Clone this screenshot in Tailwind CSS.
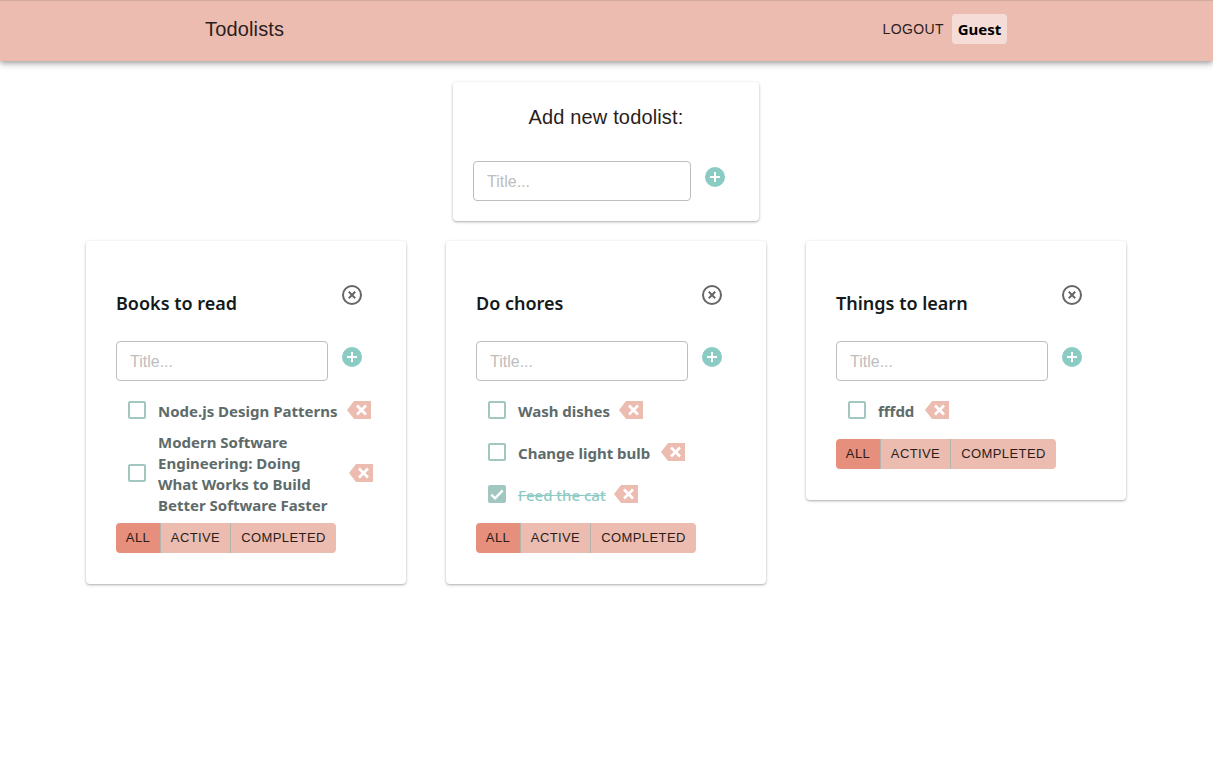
<!DOCTYPE html>
<html><head><meta charset="utf-8">
<script src="https://cdn.jsdelivr.net/npm/@tailwindcss/browser@4"></script>
<title>Todolists</title></head>
<body class="bg-white font-['Liberation_Sans',Arial,sans-serif] text-[#2b1d1b] min-h-screen">
<header class="h-[61px] bg-[#ecbcb1] pl-[205px] pr-[206px] flex items-center justify-between shadow-[inset_0_2px_2px_-2px_rgba(0,0,0,0.35),0_2px_4px_-1px_rgba(0,0,0,0.2),0_4px_5px_0_rgba(0,0,0,0.14),0_1px_10px_0_rgba(0,0,0,0.12)] pb-[3px]">
  <div class="text-[20px] leading-[28px] tracking-[0.15px]">Todolists</div>
  <div class="flex items-center gap-2">
    <span class="text-sm tracking-[0.4px]">LOGOUT</span>
    <span class="h-[30px] w-[55px] flex items-center justify-center rounded bg-[#f5dcd6] text-black text-[15px] font-bold font-['Noto_Sans',sans-serif]">Guest</span>
  </div>
</header>
<main class="flex flex-col items-center pt-[21px] pr-px pb-10">
  <section class="w-[306px] h-[139px] bg-white rounded shadow-[0_1px_3px_0_rgba(0,0,0,0.3),0_1px_1px_0_rgba(0,0,0,0.05)] pt-[23px]">
    <h2 class="text-[20px] leading-[24px] text-center tracking-[0.15px]">Add new todolist:</h2>
    <div class="flex items-start gap-[14px] mt-[32px] ml-5">
      <div class="w-[218px] h-10 border border-[#bdbdbd] rounded pl-[13px] pt-px flex items-center text-base text-[#bdbdbd]">Title...</div>
      <svg class="w-5 h-5 mt-[6px]" viewBox="0 0 20 20"><circle cx="10" cy="10" r="10" fill="#8acbc4"/><path d="M10 5v10M5 10h10" stroke="#fff" stroke-width="2"/></svg>
    </div>
  </section>
  <div class="flex items-start gap-10 mt-5">
    <section class="w-80 bg-white rounded shadow-[0_1px_3px_0_rgba(0,0,0,0.3),0_1px_1px_0_rgba(0,0,0,0.05)] pl-[30px] pt-[44px] pb-[31px]">
      <div class="flex w-[246px] justify-between items-start">
        <h3 class="text-[18px] leading-[26px] mt-[5px] font-semibold text-[#14191a] font-['Noto_Sans',sans-serif]">Books to read</h3>
        <svg class="w-5 h-5" viewBox="0 0 20 20"><circle cx="10" cy="10" r="9" fill="none" stroke="#666" stroke-width="2"/><path d="M6.8 6.8l6.4 6.4M13.2 6.8l-6.4 6.4" stroke="#666" stroke-width="2"/></svg>
      </div>
      <div class="flex items-start gap-[14px] mt-[25px] mb-[19px]">
        <div class="w-[212px] h-10 border border-[#bdbdbd] rounded pl-[13px] pt-px flex items-center text-base text-[#bdbdbd]">Title...</div>
        <svg class="w-5 h-5 mt-[6px]" viewBox="0 0 20 20"><circle cx="10" cy="10" r="10" fill="#8acbc4"/><path d="M10 5v10M5 10h10" stroke="#fff" stroke-width="2"/></svg>
      </div>
      <ul class="font-['Noto_Sans',sans-serif] text-[15px] leading-[21px] font-bold text-[#5e6b6b]">
        <li class="flex items-center pl-[12px] h-[21px] mb-[11px]">
          <span class="w-[18px] h-[18px] mb-[2px] border-2 border-[#a2c7c1] rounded-[2px] shrink-0"></span>
          <span class="ml-[12px] pt-[2px]">Node.js Design Patterns</span>
          <svg class="w-6 h-[18px] ml-[10px] mb-[2px] shrink-0" viewBox="0 0 24 18"><path d="M7 0H24V18H7L0 9Z" fill="#ecbcb1"/><path d="M10 4.5l9 9M19 4.5l-9 9" stroke="#fff" stroke-width="2.6"/></svg>
        </li>
        <li class="flex items-center pl-[12px] mb-[7px]">
          <span class="w-[18px] h-[18px] mb-[2px] border-2 border-[#a2c7c1] rounded-[2px] shrink-0"></span>
          <span class="ml-[12px] w-[179px]">Modern Software Engineering: Doing What Works to Build Better Software Faster</span>
          <svg class="w-6 h-[18px] ml-[12px] mb-[2px] shrink-0" viewBox="0 0 24 18"><path d="M7 0H24V18H7L0 9Z" fill="#ecbcb1"/><path d="M10 4.5l9 9M19 4.5l-9 9" stroke="#fff" stroke-width="2.6"/></svg>
        </li>
      </ul>
      <div class="flex w-fit h-[30px] text-[13px] tracking-[0.4px] rounded overflow-hidden">
        <span class="w-[45px] bg-[#e68f7c] border-r border-[#b5b5ad] flex items-center justify-center">ALL</span>
        <span class="w-[70px] bg-[#ecbcb1] border-r border-[#b5b5ad] flex items-center justify-center">ACTIVE</span>
        <span class="w-[105px] bg-[#ecbcb1] flex items-center justify-center">COMPLETED</span>
      </div>
    </section>
    <section class="w-80 bg-white rounded shadow-[0_1px_3px_0_rgba(0,0,0,0.3),0_1px_1px_0_rgba(0,0,0,0.05)] pl-[30px] pt-[44px] pb-[31px]">
      <div class="flex w-[246px] justify-between items-start">
        <h3 class="text-[18px] leading-[26px] mt-[5px] font-semibold text-[#14191a] font-['Noto_Sans',sans-serif]">Do chores</h3>
        <svg class="w-5 h-5" viewBox="0 0 20 20"><circle cx="10" cy="10" r="9" fill="none" stroke="#666" stroke-width="2"/><path d="M6.8 6.8l6.4 6.4M13.2 6.8l-6.4 6.4" stroke="#666" stroke-width="2"/></svg>
      </div>
      <div class="flex items-start gap-[14px] mt-[25px] mb-[19px]">
        <div class="w-[212px] h-10 border border-[#bdbdbd] rounded pl-[13px] pt-px flex items-center text-base text-[#bdbdbd]">Title...</div>
        <svg class="w-5 h-5 mt-[6px]" viewBox="0 0 20 20"><circle cx="10" cy="10" r="10" fill="#8acbc4"/><path d="M10 5v10M5 10h10" stroke="#fff" stroke-width="2"/></svg>
      </div>
      <ul class="font-['Noto_Sans',sans-serif] text-[15px] leading-[21px] font-bold text-[#5e6b6b]">
        <li class="flex items-center pl-[12px] h-[21px] mb-[21px]">
          <span class="w-[18px] h-[18px] mb-[2px] border-2 border-[#a2c7c1] rounded-[2px] shrink-0"></span>
          <span class="ml-[12px] pt-[2px]">Wash dishes</span>
          <svg class="w-6 h-[18px] ml-[9px] mb-[2px] shrink-0" viewBox="0 0 24 18"><path d="M7 0H24V18H7L0 9Z" fill="#ecbcb1"/><path d="M10 4.5l9 9M19 4.5l-9 9" stroke="#fff" stroke-width="2.6"/></svg>
        </li>
        <li class="flex items-center pl-[12px] h-[21px] mb-[21px]">
          <span class="w-[18px] h-[18px] mb-[2px] border-2 border-[#a2c7c1] rounded-[2px] shrink-0"></span>
          <span class="ml-[12px] pt-[2px]">Change light bulb</span>
          <svg class="w-6 h-[18px] ml-[11px] mb-[2px] shrink-0" viewBox="0 0 24 18"><path d="M7 0H24V18H7L0 9Z" fill="#ecbcb1"/><path d="M10 4.5l9 9M19 4.5l-9 9" stroke="#fff" stroke-width="2.6"/></svg>
        </li>
        <li class="flex items-center pl-[12px] h-[21px] mb-[18px]">
          <span class="w-[18px] h-[18px] mb-[2px] bg-[#a2c7c1] rounded-[2px] shrink-0 flex items-center justify-center"><svg class="w-4 h-4" viewBox="0 0 14 14"><path d="M2 7.5l3.3 3.3L12 3.8" fill="none" stroke="#fff" stroke-width="2"/></svg></span>
          <span class="ml-[12px] pt-[2px] line-through text-[#8fcac4] font-medium">Feed the cat</span>
          <svg class="w-6 h-[18px] ml-[8px] mb-[2px] shrink-0" viewBox="0 0 24 18"><path d="M7 0H24V18H7L0 9Z" fill="#ecbcb1"/><path d="M10 4.5l9 9M19 4.5l-9 9" stroke="#fff" stroke-width="2.6"/></svg>
        </li>
      </ul>
      <div class="flex w-fit h-[30px] text-[13px] tracking-[0.4px] rounded overflow-hidden">
        <span class="w-[45px] bg-[#e68f7c] border-r border-[#b5b5ad] flex items-center justify-center">ALL</span>
        <span class="w-[70px] bg-[#ecbcb1] border-r border-[#b5b5ad] flex items-center justify-center">ACTIVE</span>
        <span class="w-[105px] bg-[#ecbcb1] flex items-center justify-center">COMPLETED</span>
      </div>
    </section>
    <section class="w-80 bg-white rounded shadow-[0_1px_3px_0_rgba(0,0,0,0.3),0_1px_1px_0_rgba(0,0,0,0.05)] pl-[30px] pt-[44px] pb-[31px]">
      <div class="flex w-[246px] justify-between items-start">
        <h3 class="text-[18px] leading-[26px] mt-[5px] font-semibold text-[#14191a] font-['Noto_Sans',sans-serif]">Things to learn</h3>
        <svg class="w-5 h-5" viewBox="0 0 20 20"><circle cx="10" cy="10" r="9" fill="none" stroke="#666" stroke-width="2"/><path d="M6.8 6.8l6.4 6.4M13.2 6.8l-6.4 6.4" stroke="#666" stroke-width="2"/></svg>
      </div>
      <div class="flex items-start gap-[14px] mt-[25px] mb-[19px]">
        <div class="w-[212px] h-10 border border-[#bdbdbd] rounded pl-[13px] pt-px flex items-center text-base text-[#bdbdbd]">Title...</div>
        <svg class="w-5 h-5 mt-[6px]" viewBox="0 0 20 20"><circle cx="10" cy="10" r="10" fill="#8acbc4"/><path d="M10 5v10M5 10h10" stroke="#fff" stroke-width="2"/></svg>
      </div>
      <ul class="font-['Noto_Sans',sans-serif] text-[15px] leading-[21px] font-bold text-[#5e6b6b]">
        <li class="flex items-center pl-[12px] h-[21px] mb-[18px]">
          <span class="w-[18px] h-[18px] mb-[2px] border-2 border-[#a2c7c1] rounded-[2px] shrink-0"></span>
          <span class="ml-[12px] pt-[2px]">fffdd</span>
          <svg class="w-6 h-[18px] ml-[11px] mb-[2px] shrink-0" viewBox="0 0 24 18"><path d="M7 0H24V18H7L0 9Z" fill="#ecbcb1"/><path d="M10 4.5l9 9M19 4.5l-9 9" stroke="#fff" stroke-width="2.6"/></svg>
        </li>
      </ul>
      <div class="flex w-fit h-[30px] text-[13px] tracking-[0.4px] rounded overflow-hidden">
        <span class="w-[45px] bg-[#e68f7c] border-r border-[#b5b5ad] flex items-center justify-center">ALL</span>
        <span class="w-[70px] bg-[#ecbcb1] border-r border-[#b5b5ad] flex items-center justify-center">ACTIVE</span>
        <span class="w-[105px] bg-[#ecbcb1] flex items-center justify-center">COMPLETED</span>
      </div>
    </section>
  </div>
</main>
</body></html>
